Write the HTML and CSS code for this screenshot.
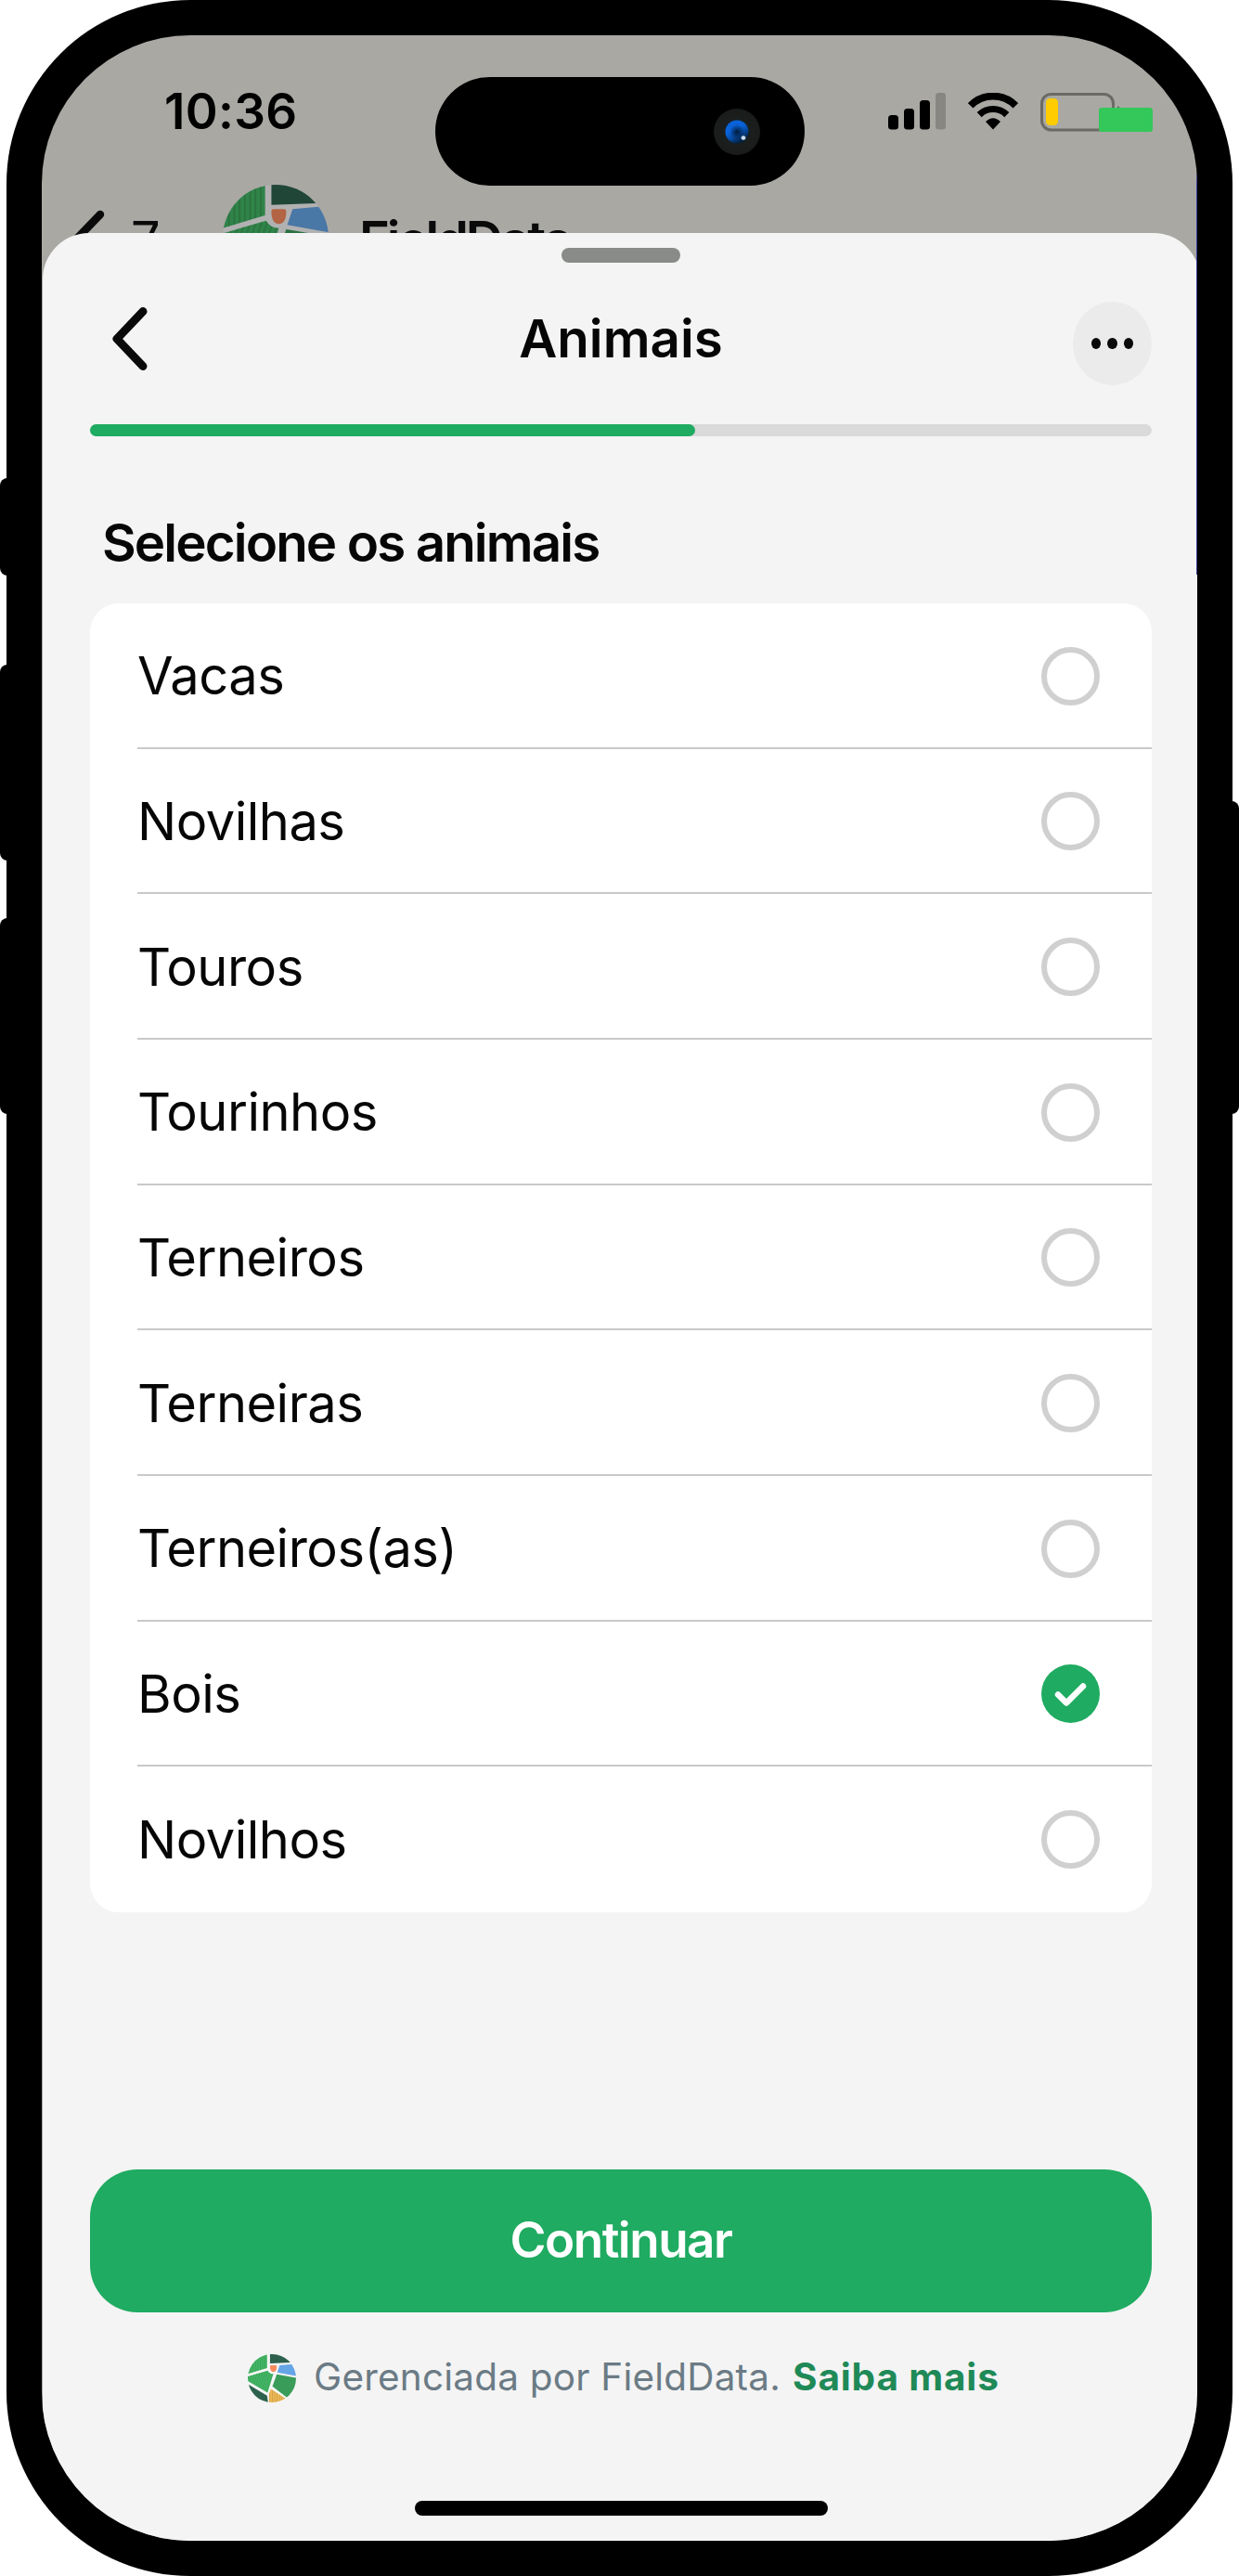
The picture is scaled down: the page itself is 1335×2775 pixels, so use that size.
FILE: index.html
```html
<!DOCTYPE html>
<html lang="pt-BR">
<head>
<meta charset="utf-8">
<title>Animais</title>
<link rel="stylesheet" href="styles.css">
</head>
<body>
<svg class="defs" width="0" height="0" aria-hidden="true">
  <defs>
    <pattern id="stripes" width="5" height="10" patternUnits="userSpaceOnUse"><rect width="1.8" height="10" fill="#000" opacity=".13"/></pattern>
    <pattern id="stripes-tilt" width="5" height="10" patternUnits="userSpaceOnUse" patternTransform="rotate(18)"><rect width="1.8" height="10" fill="#000" opacity=".12"/></pattern>
    <clipPath id="disc"><circle cx="50" cy="50" r="50"/></clipPath>
    <symbol id="fields" viewBox="0 0 100 100">
      <g clip-path="url(#disc)">
        <rect width="100" height="100" fill="#f6f6f6"/>
        <path d="M0 0H40V29L0 41Z" fill="#43b866"/>
        <path d="M0 0H40V29L0 41Z" fill="url(#stripes)"/>
        <path d="M46 0H100V17L46 19Z" fill="#2d614d"/>
        <path d="M46 25Q46 23 48 23H58Q60 23 60 25Q60 37 53 37Q46 37 46 25Z" fill="#f98b5e"/>
        <path d="M66 23L100 20V45L61 38Z" fill="#66a5e6"/>
        <path d="M0 46L41 34Q45 41 53 41L41 80L0 56Z" fill="#43b866"/>
        <path d="M0 46L41 34Q45 41 53 41L41 80L0 56Z" fill="url(#stripes-tilt)"/>
        <path d="M60 42L100 49V100L80 89L51 67Z" fill="#3a9c59"/>
        <path d="M0 62L40 86L42 100H0Z" fill="#2d614d"/>
        <path d="M48 72L78 92L70 100H44V82Z" fill="#efb955"/>
        <path d="M48 72L78 92L70 100H44V82Z" fill="url(#stripes)"/>
      </g>
    </symbol>
  </defs>
</svg>

<div class="phone">
  <i class="key key-silent"></i><i class="key key-up"></i><i class="key key-down"></i><i class="key key-power"></i>
  <div class="screen">
    <div class="status">
      <span class="time">10:36</span>
      <div class="status-icons">
        <svg width="62" height="40" viewBox="0 0 62 40"><rect y="24" width="11" height="15.5" rx="3.5"/><rect x="17" y="17" width="11" height="22.5" rx="3.5"/><rect x="34" y="8" width="11" height="31.5" rx="3.5"/><rect x="51" y="0" width="11" height="39.5" rx="3.5" fill="#878681"/></svg>
        <svg width="54" height="40" viewBox="0 0 54 40"><path d="M2.7 13.8A34 34 0 0 1 51.3 13.8" fill="none" stroke="#000" stroke-width="7.8"/><path d="M12.2 23.6A21 21 0 0 1 41.8 23.6" fill="none" stroke="#000" stroke-width="7.2"/><path d="M19 31Q27 23.4 35 31L27 39.4Z"/></svg>
        <svg class="battery" width="121" height="42" viewBox="0 0 121 42"><rect x="1.5" y="1.5" width="77" height="38.5" rx="10" fill="none" stroke="#6b6a65" stroke-width="3"/><path d="M83 14Q86 15 87 18H83Z" fill="#6b6a65"/><rect x="6" y="6" width="13" height="29" rx="4.5" fill="#fc0"/><rect x="63" y="16" width="58" height="26" rx="3" fill="#34c759"/></svg>
      </div>
    </div>
    <div class="chat-bar">
      <svg class="chat-back" width="36" height="68" viewBox="0 0 36 68"><path d="M31 5L3 34L31 63" fill="none" stroke="#0a0a0a" stroke-width="8.5" stroke-linecap="round" stroke-linejoin="round"/></svg>
      <span class="unread">7</span>
      <svg class="avatar" width="114" height="114"><use href="#fields"/></svg>
      <span class="chat-name">FieldData</span>
    </div>
    <div class="island"><i class="lens"></i></div>

    <div class="sheet">
      <div class="handle"></div>
      <div class="nav">
        <svg class="back" width="38" height="70" viewBox="0 0 38 70"><path d="M33 5.500L5 35L33 64.500" fill="none" stroke="#0a0a0a" stroke-width="9" stroke-linecap="round" stroke-linejoin="round"/></svg>
        <h1>Animais</h1>
        <div class="more"><i></i><i></i><i></i></div>
      </div>
      <div class="progress"><div class="progress-fill" style="width:57%"></div></div>
      <h2>Selecione os animais</h2>
      <ul class="options">
        <li><span>Vacas</span><i class="radio"></i></li>
        <li><span>Novilhas</span><i class="radio"></i></li>
        <li><span>Touros</span><i class="radio"></i></li>
        <li><span>Tourinhos</span><i class="radio"></i></li>
        <li><span>Terneiros</span><i class="radio"></i></li>
        <li><span>Terneiras</span><i class="radio"></i></li>
        <li><span>Terneiros(as)</span><i class="radio"></i></li>
        <li><span>Bois</span><svg width="63" height="63" viewBox="0 0 63 63"><circle cx="31.500" cy="31.500" r="31.500" fill="#1fab61"/><path d="M18 32.500L27 41.500L45 23.500" fill="none" stroke="#fff" stroke-width="6.500" stroke-linecap="round" stroke-linejoin="round"/></svg></li>
        <li><span>Novilhos</span><i class="radio"></i></li>
      </ul>
      <button class="continue" type="button">Continuar</button>
      <div class="managed">
        <svg width="52" height="52"><use href="#fields"/></svg>
        <span class="managed-text">Gerenciada por FieldData.</span>
        <a class="learn">Saiba mais</a>
      </div>
      <div class="home"></div>
    </div>
  </div>
</div>
</body>
</html>
```
FILE: styles.css
```css
* { box-sizing: border-box; }
body { margin: 0; background: #fff; font-family: Inter, "Liberation Sans", sans-serif; color: #060606; }
i { display: block; }
svg { display: block; flex: none; }
.defs { position: absolute; }

.phone { position: relative; width: 1321px; height: 2775px; margin-left: 7px; border-radius: 198px; background: #000; padding: 38px; }
.key { position: absolute; left: -7px; width: 20px; background: #000; border-radius: 8px; }
.key-silent { top: 515px; height: 105px; }
.key-up { top: 716px; height: 211px; }
.key-down { top: 989px; height: 211px; }
.key-power { left: auto; right: -7px; top: 863px; height: 337px; }

.screen { position: relative; height: 2699px; border-radius: 160px; overflow: hidden; background: #a9a8a3; }
.screen::after { content: ""; position: absolute; right: 0; top: 150px; width: 1px; height: 431px; background: #3a3f9c; }

.status { display: flex; justify-content: space-between; align-items: center; height: 161px; padding: 2px 48px 0 132px; }
.time { font-size: 53px; font-weight: 600; line-height: 60px; letter-spacing: .3px; color: #000; }
.status-icons { display: flex; align-items: center; }
.status-icons svg + svg { margin-left: 24px; }
.status-icons .battery { margin-top: 2px; }

.chat-bar { display: flex; align-items: center; height: 114px; padding-left: 32px; font-size: 56px; line-height: 64px; color: #0a0a0a; }
.chat-back { margin-top: 8px; }
.unread { width: 83px; margin: 5px 0 0 28px; }
.avatar { margin-left: 16px; filter: brightness(.72); }
.chat-name { margin: 5px 0 0 33px; font-weight: 600; letter-spacing: -3.1px; }

.island { position: absolute; left: 424px; top: 45px; width: 398px; height: 117px; border-radius: 59px; background: #000; display: flex; align-items: center; justify-content: flex-end; padding-right: 48px; }
.lens { width: 50px; height: 50px; border-radius: 50%; background: radial-gradient(circle at 64% 63%, #cfe0ee 0 1.5px, transparent 3px), radial-gradient(circle at 50% 50%, rgba(0,16,34,.85) 0, transparent 8px, transparent 12px, #16201f 13px, #1c1e1e 15px, #1a1c1c 25px), linear-gradient(150deg, #0a62d8 45%, #0649a0 55%, #04203f 66%); }

.sheet { position: absolute; left: 1px; top: 213px; width: 1247px; height: 2486px; padding: 16px 52px 0 51px; border-radius: 50px 50px 0 0; background: #f4f4f4; border-bottom: 1px solid #fff; }
.handle { width: 128px; height: 16px; margin: 0 auto; border-radius: 8px; background: #898b89; }
.nav { display: grid; grid-template: 90px / 85px 1fr 85px; align-items: center; margin-top: 37px; }
.back { margin-left: 24px; }
h1 { margin: 0; text-align: center; font-size: 56.500px; font-weight: 600; line-height: 70px; }
.more { display: flex; align-items: center; justify-content: center; gap: 7px; width: 85px; height: 90px; margin-top: 9px; border-radius: 50%; background: #ebebeb; }
.more i { width: 10.500px; height: 12px; border-radius: 50%; background: #0a0a0a; }

.progress { height: 13px; margin-top: 47px; border-radius: 7px; background: #dadada; }
.progress-fill { height: 13px; border-radius: 7px; background: #1fab61; }
h2 { margin: 80px 0 30px 13px; font-size: 56.500px; font-weight: 600; line-height: 70px; letter-spacing: -1.9px; white-space: nowrap; }

.options { display: grid; grid-template-rows: repeat(9, 1fr); height: 1410px; margin: 0; padding: 0 0 0 51px; list-style: none; border-radius: 31px; background: #fff; font-size: 56px; letter-spacing: -.5px; }
.options li { display: flex; align-items: center; justify-content: space-between; padding-right: 56.500px; }
.options li + li { box-shadow: 0 -2px 0 #c9c9c9; }
.radio { width: 63px; height: 63px; border: 6.500px solid #d0d0d0; border-radius: 50%; }

.continue { display: block; width: 100%; height: 154px; margin-top: 277px; padding: 0 0 3px; border: 0; border-radius: 51px; background: #1fab61; color: #fff; font: 600 53px/64px Inter, sans-serif; letter-spacing: -1.5px; }
.managed { display: flex; align-items: center; height: 52px; margin-top: 45px; padding-left: 170px; font-size: 40.500px; line-height: 49px; letter-spacing: .2px; white-space: nowrap; color: #6b7b85; }
.managed-text { margin: -3px 0 0 19px; }
.learn { margin: -3px 0 0 13px; font-weight: 700; letter-spacing: .85px; color: #1f8a57; }
.home { width: 445px; height: 16px; margin: 106px auto 0; border-radius: 8px; background: #000; }
```
